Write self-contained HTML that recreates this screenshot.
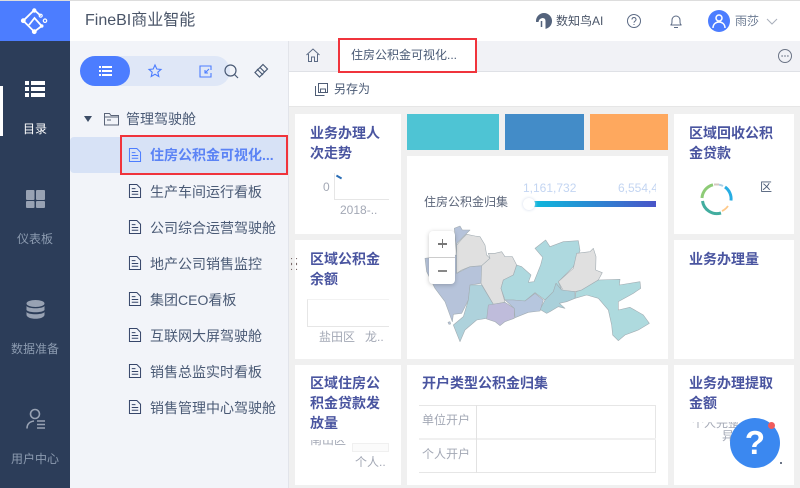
<!DOCTYPE html>
<html><head><meta charset="utf-8">
<style>
*{box-sizing:border-box;margin:0;padding:0}
html,body{width:800px;height:488px;overflow:hidden;background:#f0f0f0}
body{position:relative;font-family:"Liberation Sans","Noto Sans CJK SC",sans-serif;font-size:12px;color:#3d4d66}
.a{position:absolute}
.t{position:absolute;white-space:nowrap;line-height:18px}
.c{position:absolute;background:#fff}
.h{position:absolute;font-weight:700;font-size:14px;line-height:20px;color:#4a55a0;white-space:nowrap}
.g{color:#a3a8b5}
.side{color:#8c9bb0;width:70px;text-align:center;left:0}
.it{left:150px;font-size:14px;color:#4a5a75}
svg{position:absolute;overflow:visible}
</style></head><body>
<!-- top bar -->
<div class="a" style="left:0;top:0;width:800px;height:41px;background:#fff;border-top:1px solid #ddd"></div>
<div class="a" style="left:0;top:1px;width:70px;height:40px;background:#4c7dff"></div>
<svg style="left:20px;top:8px" width="30" height="28" viewBox="0 0 30 28" fill="none" stroke="#fff" stroke-width="1.800">
<path d="M3.300 12.700 L14.300 2 M3.300 12.700 L14.300 23.700 L21.700 18 M9 17 L14.500 10 L19 15 L21.700 18 M14.300 2 L20.700 7.700"/>
<circle cx="3.300" cy="12.700" r="2.400" fill="#fff" stroke="none"/><circle cx="14.300" cy="2.500" r="2.200" fill="#fff" stroke="none"/><circle cx="14.300" cy="23.700" r="2.400" fill="#fff" stroke="none"/><circle cx="25" cy="12.700" r="1.700" stroke-width="1.200"/><circle cx="20.700" cy="7.700" r="1.500" stroke-width="1.200"/><circle cx="21.700" cy="18" r="1.800" fill="#fff" stroke="none"/>
</svg>
<div class="t" style="left:85px;top:12px;font-size:16px;color:#4a5568">FineBI商业智能</div>
<svg style="left:536px;top:13px" width="16" height="16" viewBox="0 0 16 16"><circle cx="8" cy="8" r="8" fill="#54637c"/><path d="M-1 17V9H2.500Q3 5.500 6.500 5Q9.500 5 9.500 8V17Z" fill="#fff"/><path d="M5.500 8V14" stroke="#54637c" stroke-width="1.500"/></svg>
<div class="t" style="left:556px;top:12px;color:#4a5568">数知鸟AI</div>
<svg style="left:627px;top:14px" width="14" height="14" viewBox="0 0 14 14" fill="none" stroke="#5b6a84" stroke-width="1"><circle cx="7" cy="7" r="6.500"/><path d="M5 5.500a2 2 0 1 1 3 1.700c-.7.400-1 .8-1 1.600M7 10v1"/></svg>
<svg style="left:669px;top:14px" width="14" height="14" viewBox="0 0 14 14" fill="none" stroke="#5b6a84" stroke-width="1"><path d="M1.500 11c1.500-.5 1.500-2 1.500-5a4 4 0 0 1 8 0c0 3 0 4.500 1.500 5Z M5 13.500h4"/></svg>
<div class="a" style="left:708px;top:10px;width:22px;height:22px;border-radius:50%;background:#4c7dff"></div>
<svg style="left:708px;top:10px" width="22" height="22" viewBox="0 0 22 22" fill="none" stroke="#fff" stroke-width="1.500"><circle cx="11" cy="8" r="3"/><path d="M5 18c0-4 3-6 6-6s6 2 6 6"/></svg>
<div class="t" style="left:735px;top:12px;color:#6b7a92">雨莎</div>
<svg style="left:766px;top:18px" width="12" height="7" viewBox="0 0 12 7" fill="none" stroke="#a9afbb"><path d="M1 1l5 5 5-5"/></svg>
<!-- sidebar -->
<div class="a" style="left:0;top:41px;width:70px;height:447px;background:#2c3d59"></div>
<div class="a" style="left:0;top:86px;width:3px;height:50px;background:#fff"></div>
<svg style="left:25px;top:80px" width="20" height="18" viewBox="0 0 20 18" fill="#fff"><path d="M0 1h4v4H0zM6 1h14v4H6zM0 7h4v4H0zM6 7h14v4H6zM0 13h4v4H0zM6 13h14v4H6z"/></svg>
<div class="t side" style="top:120px;color:#fff">目录</div>
<svg style="left:26px;top:190px" width="19" height="18" viewBox="0 0 19 18" fill="#98a2b3"><rect width="8.500" height="10" rx="1"/><rect x="10" width="9" height="10" rx="1"/><rect y="11" width="8.500" height="7" rx="1"/><rect x="10" y="11" width="9" height="7" rx="1"/></svg>
<div class="t side" style="top:230px">仪表板</div>
<svg style="left:26px;top:300px" width="19" height="19" viewBox="0 0 19 19" fill="#98a2b3"><ellipse cx="9.500" cy="3.500" rx="9" ry="3.500"/><path d="M.5 6c2 3 16 3 18 0v4c-2 3-16 3-18 0zM.5 12c2 3 16 3 18 0v3c-1 5-17 5-18 0z"/></svg>
<div class="t side" style="top:340px">数据准备</div>
<svg style="left:25px;top:408px" width="21" height="21" viewBox="0 0 21 21" fill="none" stroke="#98a2b3" stroke-width="1.600"><circle cx="10" cy="6" r="4.500"/><path d="M2 20.500C2 16 5 13.500 9 13M12 13h8M12 16.500h8M12 20h8"/></svg>
<div class="t side" style="top:450px">用户中心</div>
<!-- left panel -->
<div class="a" style="left:70px;top:41px;width:219px;height:447px;background:#f2f4f9;border-right:1px solid #e2e4ea"></div>
<div class="a" style="left:80px;top:56px;width:150px;height:30px;border-radius:15px;background:#dfe7f7"></div>
<div class="a" style="left:80px;top:56px;width:50px;height:30px;border-radius:15px;background:#4c7dff"></div>
<svg style="left:99px;top:65px" width="13" height="12" viewBox="0 0 13 12" fill="#fff"><path d="M0 1h2v2H0zM3 1h10v2H3zM0 5h2v2H0zM3 5h10v2H3zM0 9h2v2H0zM3 9h10v2H3z"/></svg>
<svg style="left:148px;top:64px" width="14" height="14" viewBox="0 0 14 14" fill="none" stroke="#4c7dff" stroke-width="1.100"><path d="M7 1l1.800 4 4.200.4-3.200 2.800 1 4.300L7 10.300 3.200 12.500l1-4.300L1 5.400 5.200 5z"/></svg>
<svg style="left:199px;top:65px" width="13" height="13" viewBox="0 0 13 13" fill="none" stroke="#4c7dff" stroke-width="1.100"><path d="M12 5V1H1v11h11V8M10 4L6 8M6 5v3h3"/></svg>
<svg style="left:224px;top:64px" width="15" height="15" viewBox="0 0 15 15" fill="none" stroke="#4a5a75" stroke-width="1.200"><circle cx="6.500" cy="6.500" r="5.500"/><path d="M10.500 10.500L14 14"/></svg>
<svg style="left:254px;top:63px" width="15" height="15" viewBox="0 0 15 15" fill="none" stroke="#4a5a75" stroke-width="1.200"><path d="M9 1.500l4.500 4.500-8 8L1 9.500z M6 4.500l4.500 4.500M3 6l6 6"/></svg>
<svg style="left:84px;top:116px" width="8" height="6" viewBox="0 0 8 6" fill="#3d4d66"><path d="M0 0h8L4 6z"/></svg>
<svg style="left:104px;top:112px" width="15" height="14" viewBox="0 0 15 14" fill="none" stroke="#5a6478"><path d="M.5 13V1.500h5l1.500 2h7.500V13ZM.5 5h14M3 8h4"/></svg>
<div class="t" style="left:126px;top:110px;font-size:14px;color:#4a5a75">管理驾驶舱</div>
<div class="a" style="left:70px;top:137px;width:218px;height:36px;background:#d7e2f6;border-radius:4px 0 0 4px"></div>
<div class="a" style="left:120px;top:135px;width:168px;height:40px;border:2px solid #f0343c"></div>
<div class="t" style="left:150px;top:146px;font-size:14px;font-weight:700;color:#5b83f5">住房公积金可视化...</div>
<svg style="left:129px;top:148px" width="12" height="14" viewBox="0 0 13 15" preserveAspectRatio="none" fill="none" stroke="#4c7dff" stroke-width="1.100"><path d="M.5.500h8l4 4v10H.5zM3 5h4M3 8h7M3 11h7"/></svg>
<svg style="left:129px;top:184px" width="12" height="14" viewBox="0 0 13 15" preserveAspectRatio="none" fill="none" stroke="#36466a" stroke-width="1.100"><path d="M.5.500h8l4 4v10H.5zM3 5h4M3 8h7M3 11h7"/></svg>
<div class="t it" style="top:183px">生产车间运行看板</div>
<svg style="left:129px;top:220px" width="12" height="14" viewBox="0 0 13 15" preserveAspectRatio="none" fill="none" stroke="#36466a" stroke-width="1.100"><path d="M.5.500h8l4 4v10H.5zM3 5h4M3 8h7M3 11h7"/></svg>
<div class="t it" style="top:219px">公司综合运营驾驶舱</div>
<svg style="left:129px;top:256px" width="12" height="14" viewBox="0 0 13 15" preserveAspectRatio="none" fill="none" stroke="#36466a" stroke-width="1.100"><path d="M.5.500h8l4 4v10H.5zM3 5h4M3 8h7M3 11h7"/></svg>
<div class="t it" style="top:255px">地产公司销售监控</div>
<svg style="left:129px;top:292px" width="12" height="14" viewBox="0 0 13 15" preserveAspectRatio="none" fill="none" stroke="#36466a" stroke-width="1.100"><path d="M.5.500h8l4 4v10H.5zM3 5h4M3 8h7M3 11h7"/></svg>
<div class="t it" style="top:291px">集团CEO看板</div>
<svg style="left:129px;top:328px" width="12" height="14" viewBox="0 0 13 15" preserveAspectRatio="none" fill="none" stroke="#36466a" stroke-width="1.100"><path d="M.5.500h8l4 4v10H.5zM3 5h4M3 8h7M3 11h7"/></svg>
<div class="t it" style="top:327px">互联网大屏驾驶舱</div>
<svg style="left:129px;top:364px" width="12" height="14" viewBox="0 0 13 15" preserveAspectRatio="none" fill="none" stroke="#36466a" stroke-width="1.100"><path d="M.5.500h8l4 4v10H.5zM3 5h4M3 8h7M3 11h7"/></svg>
<div class="t it" style="top:363px">销售总监实时看板</div>
<svg style="left:129px;top:400px" width="12" height="14" viewBox="0 0 13 15" preserveAspectRatio="none" fill="none" stroke="#36466a" stroke-width="1.100"><path d="M.5.500h8l4 4v10H.5zM3 5h4M3 8h7M3 11h7"/></svg>
<div class="t it" style="top:399px">销售管理中心驾驶舱</div>
<!-- tab bar -->
<div class="a" style="left:289px;top:41px;width:511px;height:31px;background:#f1f2f6;border-bottom:1px solid #dfe1e6"></div>
<div class="a" style="left:289px;top:72px;width:511px;height:35px;background:#fff;border-bottom:1px solid #e6e6e6"></div>
<svg style="left:306px;top:48px" width="14" height="14" viewBox="0 0 14 14" fill="none" stroke="#5b6a84"><path d="M.5 7L7 1l6.500 6M2.500 6v7.500h3V9h3v4.500h3V6"/></svg>
<div class="a" style="left:338px;top:38px;width:139px;height:35px;background:#fff;border:2px solid #f0343c"></div>
<div class="t" style="left:351px;top:46px;color:#4a5a75">住房公积金可视化...</div>
<svg style="left:778px;top:49px" width="14" height="14" viewBox="0 0 14 14" fill="none" stroke="#6b7486"><circle cx="7" cy="7" r="6.500"/><path d="M3.500 7h1.200M6.400 7h1.200M9.300 7h1.200" stroke-width="1.400"/></svg>
<svg style="left:315px;top:83px" width="13" height="13" viewBox="0 0 13 13" fill="none" stroke="#4f5d76"><path d="M3.500 9.500V.5h9v9h-9zM.5 3v9.500h9M5.500 9.500V6h5v3.500"/></svg>
<div class="t" style="left:334px;top:80px;color:#4a5a75">另存为</div>
<!-- cards -->
<div class="c" style="left:295px;top:114px;width:106px;height:120px"></div>
<div class="h" style="left:310px;top:123px">业务办理人<br>次走势</div>
<div class="t g" style="left:323px;top:178px">0</div>
<div class="a" style="left:334px;top:173px;width:55px;height:27px;border-left:1px solid #e6e6e6;border-bottom:1px solid #e6e6e6"></div>
<div class="a" style="left:336px;top:176px;width:6px;height:2px;background:#2a6db5;transform:rotate(30deg)"></div>
<div class="t g" style="left:340px;top:201px">2018-..</div>

<div class="c" style="left:295px;top:240px;width:106px;height:119px"></div>
<div class="h" style="left:310px;top:249px">区域公积金<br>余额</div>
<div class="a" style="left:307px;top:299px;width:82px;height:28px;border-left:1px solid #e6e6e6;border-bottom:1px solid #e6e6e6;border-top:1px solid #f2f2f2"></div>
<div class="t g" style="left:319px;top:328px">盐田区&nbsp;&nbsp;&nbsp;龙..</div>
<div class="t" style="left:290px;top:258px;font-size:11px;line-height:6px;color:#7a6a6a;letter-spacing:2px">::<br>::</div>

<div class="c" style="left:295px;top:365px;width:106px;height:120px"></div>
<div class="h" style="left:310px;top:373px">区域住房公<br>积金贷款发<br>放量</div>
<div class="a" style="left:310px;top:440px;width:40px;height:6px;overflow:hidden"><div class="t g" style="top:-9px;left:0">南山区</div></div>
<div class="a" style="left:352px;top:443px;width:37px;height:9px;background:#fbfbfb;border:1px solid #f0f0f0"></div>
<div class="t g" style="left:355px;top:453px">个人..</div>

<div class="a" style="left:407px;top:114px;width:92px;height:36px;background:#4ec4d4"></div>
<div class="a" style="left:505px;top:114px;width:79px;height:36px;background:#438cc8"></div>
<div class="a" style="left:590px;top:114px;width:78px;height:36px;background:#fea85e"></div>
<div class="c" style="left:407px;top:156px;width:261px;height:203px"></div>
<div class="t" style="left:424px;top:193px;color:#5a6478">住房公积金归集</div>
<div class="t" style="left:523px;top:179px;color:#c3d5f2">1,161,732</div>
<div class="a" style="left:618px;top:179px;width:38px;height:18px;overflow:hidden"><div class="t" style="left:0;top:0;color:#c3d5f2">6,554,423</div></div>
<div class="a" style="left:529px;top:201px;width:127px;height:6px;background:linear-gradient(90deg,#0bbcdd,#4a55c8)"></div>
<div class="a" style="left:523px;top:198px;width:12px;height:12px;border-radius:50%;background:#fff;box-shadow:0 0 3px #cfd8ea"></div>
<svg style="left:420px;top:220px" width="240" height="135" viewBox="0 0 720 405" stroke="#a3adb3" stroke-width="1.800" stroke-linejoin="round">
<path fill="#b6c3da" d="M103 25L120 18L127 30L150 30L110 70L110 160L150 140L187 137L183 190L150 195L145 240L125 280L100 283L97 305L75 245L45 205L20 155L15 115L110 105Z"/>
<path fill="#b6c3da" d="M84 307L90 305L92 312L87 313Z"/>
<path fill="#e0e0e0" d="M110 75L125 58L140 43L165 48L180 50L195 75L200 105L210 115L185 137L150 140L125 150L110 160Z"/>
<path fill="#e0e0e0" d="M185 137L210 115L205 100L225 100L245 95L255 110L277 110L290 135L280 165L250 180L243 205L255 247L220 253L183 190Z"/>
<path fill="#aed9df" d="M290 135L305 140L333 165L325 187L342 185L352 160L362 135L368 112L345 85L377 60L390 80L430 65L475 62L480 92L470 115L460 140L415 185L425 210L408 190L400 215L375 240L345 218L315 243L280 240L255 240L243 205L250 180L280 165Z"/>
<path fill="#e0e0e0" d="M415 185L460 145L470 100L510 95L520 85L528 110L527 150L547 158L535 180L485 210L465 215L430 212Z"/>
<path fill="#aedade" d="M465 235L468 215L485 210L535 180L600 178L598 195L660 185L662 205L640 220L595 245L595 270L630 262L670 285L688 310L655 330L615 345L595 362L578 345L575 315L565 270L535 235L500 225Z"/>
<path fill="#a9d0da" d="M360 268L375 240L400 215L408 190L425 210L465 215L465 235L440 245L418 250L435 265L415 260L390 275L380 280Z"/>
<path fill="#aed2dc" d="M100 315L130 290L145 240L150 195L185 195L220 253L200 295L170 300L135 330L120 365L110 340Z"/>
<path fill="#bfbcdb" d="M205 255L255 247L283 265L283 295L255 305L240 317L225 305L200 297Z"/>
<path fill="#b6c6de" d="M255 240L280 240L315 243L345 220L370 240L360 273L325 277L285 293L283 265Z"/>
</svg>
<div class="a" style="left:429px;top:231px;width:26px;height:53px;background:#fff;border-radius:4px;box-shadow:0 1px 5px rgba(0,0,0,.22)"></div>
<div class="a" style="left:429px;top:257px;width:26px;height:1px;background:#ccc"></div>
<div class="a" style="left:438px;top:243px;width:9px;height:1.500px;background:#777"></div>
<div class="a" style="left:441.700px;top:239px;width:1.500px;height:9px;background:#777"></div>
<div class="a" style="left:438px;top:270px;width:9px;height:2px;background:#888"></div>

<div class="c" style="left:407px;top:365px;width:261px;height:120px"></div>
<div class="h" style="left:422px;top:373px">开户类型公积金归集</div>
<div class="a" style="left:419px;top:405px;width:237px;height:68px;border:1px solid #e6e6e6;border-left:0"></div>
<div class="a" style="left:419px;top:438px;width:237px;height:2px;background:#f0f0f0"></div>
<div class="a" style="left:476px;top:405px;width:1px;height:68px;background:#e2e2e2"></div>
<div class="t g" style="left:422px;top:411px">单位开户</div>
<div class="t g" style="left:422px;top:445px">个人开户</div>

<div class="c" style="left:674px;top:114px;width:120px;height:120px"></div>
<div class="h" style="left:689px;top:123px">区域回收公积<br>金贷款</div>
<svg style="left:700px;top:183px" width="33" height="31" viewBox="0 0 33 31" fill="none" stroke-width="3">
<path d="M14 1.500L19 1.500" stroke="#d5c7c0" stroke-width="2"/>
<path d="M19 1.700A14.500 14.500 0 0 1 23 3" stroke="#a9cfe6" stroke-width="2"/>
<path d="M25 4A14.500 14.500 0 0 1 31 17.500" stroke="#27ade3"/>
<path d="M28 23A14.500 14.500 0 0 1 22 28" stroke="#fec98a" stroke-width="1.800"/>
<path d="M21 30A14.500 14.500 0 0 1 2.500 18" stroke="#42ad9f"/>
<path d="M2 15A14.500 14.500 0 0 1 13 1.800" stroke="#8dcb76"/>
</svg>
<div class="t" style="left:760px;top:178px;color:#4a5a75">区</div>

<div class="c" style="left:674px;top:240px;width:120px;height:119px"></div>
<div class="h" style="left:689px;top:249px">业务办理量</div>

<div class="c" style="left:674px;top:365px;width:120px;height:120px"></div>
<div class="h" style="left:689px;top:373px">业务办理提取<br>金额</div>
<div class="a" style="left:692px;top:422px;width:46px;height:8px;overflow:hidden"><div class="t g" style="top:-8px;left:0">个人完整</div></div>
<div class="t g" style="left:722px;top:427px">异</div>
<div class="a" style="left:730px;top:418px;width:50px;height:50px;border-radius:50%;background:#3b88f0"></div>
<div class="a" style="left:768px;top:422px;width:7px;height:7px;border-radius:50%;background:#ef5c5c"></div>
<div class="a" style="left:779.500px;top:462px;width:2px;height:2px;background:#6b7486"></div>
<div class="t" style="left:730px;top:431px;width:50px;text-align:center;font-size:33px;line-height:24px;font-weight:700;color:#fff">?</div>
</body></html>
